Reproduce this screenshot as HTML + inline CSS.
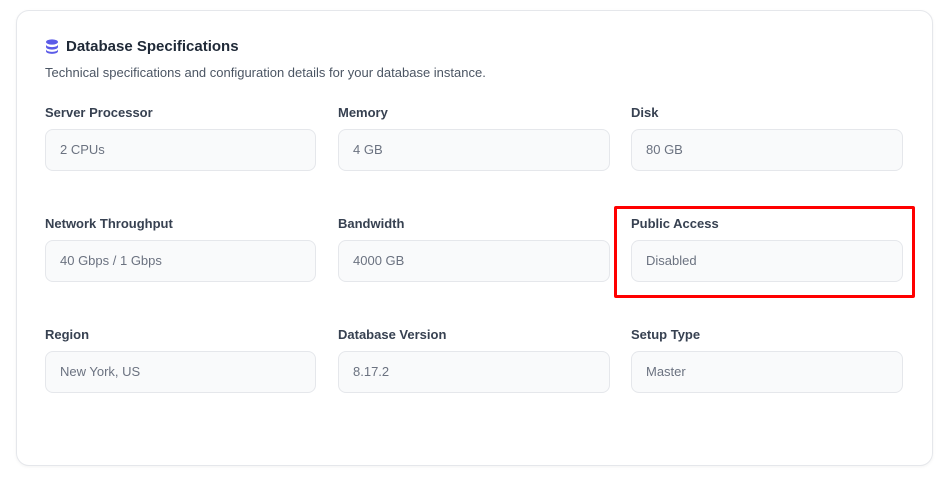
<!DOCTYPE html>
<html><head><style>
body{margin:0;width:952px;height:485px;background:#fff;font-family:"Liberation Sans",sans-serif;position:relative;overflow:hidden}
.card{position:absolute;left:16px;top:10px;width:915px;height:454px;border:1px solid #e5e7eb;border-radius:13px;box-shadow:0 1px 3px rgba(0,0,0,.05)}
.t{position:absolute;left:66px;top:38px;font-size:15px;font-weight:bold;color:#1f2937}
.s{position:absolute;left:45px;top:65px;font-size:13px;color:#4b5563}
.l{position:absolute;font-size:13px;font-weight:bold;color:#374151}
.i{position:absolute;width:271px;height:42px;border:1px solid #e5e7eb;border-radius:8px;background:#f9fafb;box-sizing:border-box;padding-left:14px;line-height:40px;font-size:13px;color:#6b7280}
.red{position:absolute;left:614px;top:206px;width:301px;height:92px;border:3px solid #f00;box-sizing:border-box;border-radius:2px}
</style></head><body>
<div class="card"></div>
<svg style="position:absolute;left:45px;top:39px" width="14" height="15" viewBox="0 0 14 15"><ellipse cx="7" cy="3" rx="6" ry="2.6" fill="#5b5be8"/><path d="M1 5.5c0 1.5 2.7 2.6 6 2.6s6-1.1 6-2.6v2.5c0 1.5-2.7 2.6-6 2.6S1 9.5 1 8z" fill="#5b5be8"/><path d="M1 10.3c0 1.5 2.7 2.6 6 2.6s6-1.1 6-2.6v2c0 1.5-2.7 2.6-6 2.6s-6-1.1-6-2.6z" fill="#5b5be8"/></svg>
<div class="t">Database Specifications</div>
<div class="s">Technical specifications and configuration details for your database instance.</div>

<div class="l" style="left:45px;top:105px">Server Processor</div>
<div class="i" style="left:45px;top:129px">2 CPUs</div>
<div class="l" style="left:338px;top:105px">Memory</div>
<div class="i" style="left:338px;top:129px;width:272px">4 GB</div>
<div class="l" style="left:631px;top:105px">Disk</div>
<div class="i" style="left:631px;top:129px;width:272px">80 GB</div>

<div class="l" style="left:45px;top:216px">Network Throughput</div>
<div class="i" style="left:45px;top:240px">40 Gbps / 1 Gbps</div>
<div class="l" style="left:338px;top:216px">Bandwidth</div>
<div class="i" style="left:338px;top:240px;width:272px">4000 GB</div>
<div class="l" style="left:631px;top:216px">Public Access</div>
<div class="i" style="left:631px;top:240px;width:272px">Disabled</div>

<div class="l" style="left:45px;top:327px">Region</div>
<div class="i" style="left:45px;top:351px">New York, US</div>
<div class="l" style="left:338px;top:327px">Database Version</div>
<div class="i" style="left:338px;top:351px;width:272px">8.17.2</div>
<div class="l" style="left:631px;top:327px">Setup Type</div>
<div class="i" style="left:631px;top:351px;width:272px">Master</div>
<div class="red"></div>
</body></html>
